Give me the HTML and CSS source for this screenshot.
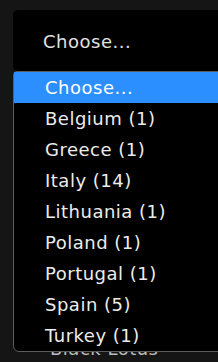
FILE: index.html
```html
<!DOCTYPE html>
<html lang="en">
  <head>
    <meta charset="UTF-8" />
    <meta name="viewport" content="width=device-width, initial-scale=1.0" />
    <title>Choose a country</title>
    <link rel="stylesheet" href="styles.css">
  </head>
  <body>
    <div class="field">
      <div class="select">Choose...</div>
      <ul class="options">
        <li class="option selected">Choose...</li>
        <li class="option">Belgium (1)</li>
        <li class="option">Greece (1)</li>
        <li class="option">Italy (14)</li>
        <li class="option">Lithuania (1)</li>
        <li class="option">Poland (1)</li>
        <li class="option">Portugal (1)</li>
        <li class="option">Spain (5)</li>
        <li class="option">Turkey (1)</li>
      </ul>
    </div>
    <p class="card-name">Black Lotus</p>
  </body>
</html>
```

FILE: styles.css
```css
body {
  margin: 0;
  padding: 10px 0 0 13px;
  background: #151515;
  font-family: "DejaVu Sans", sans-serif;
  letter-spacing: 0.5px;
  overflow: hidden;
  width: 400px;
}
.field {
  position: relative;
}
.select {
  width: 260px;
  height: 61px;
  box-sizing: border-box;
  padding: 1px 0 0 30px;
  background: #000;
  border-radius: 5px;
  color: #e2e2e2;
  font-size: 18px;
  line-height: 61px;
}
.options {
  position: absolute;
  top: 61px;
  left: 0;
  width: 280px;
  margin: 0;
  padding: 0;
  list-style: none;
  background: #000;
  border: 1px solid #5c5c5c;
  border-radius: 4px 0 0 6px;
  z-index: 2;
}
.option {
  height: 31px;
  line-height: 31px;
  padding-left: 31px;
  color: #ececec;
  font-size: 18px;
}
.option.selected {
  background: #2b8fff;
  color: #fff;
}
.card-name {
  margin: 267px 0 0 37px;
  color: #bdbdbd;
  font-size: 18px;
  line-height: 22px;
}
```
